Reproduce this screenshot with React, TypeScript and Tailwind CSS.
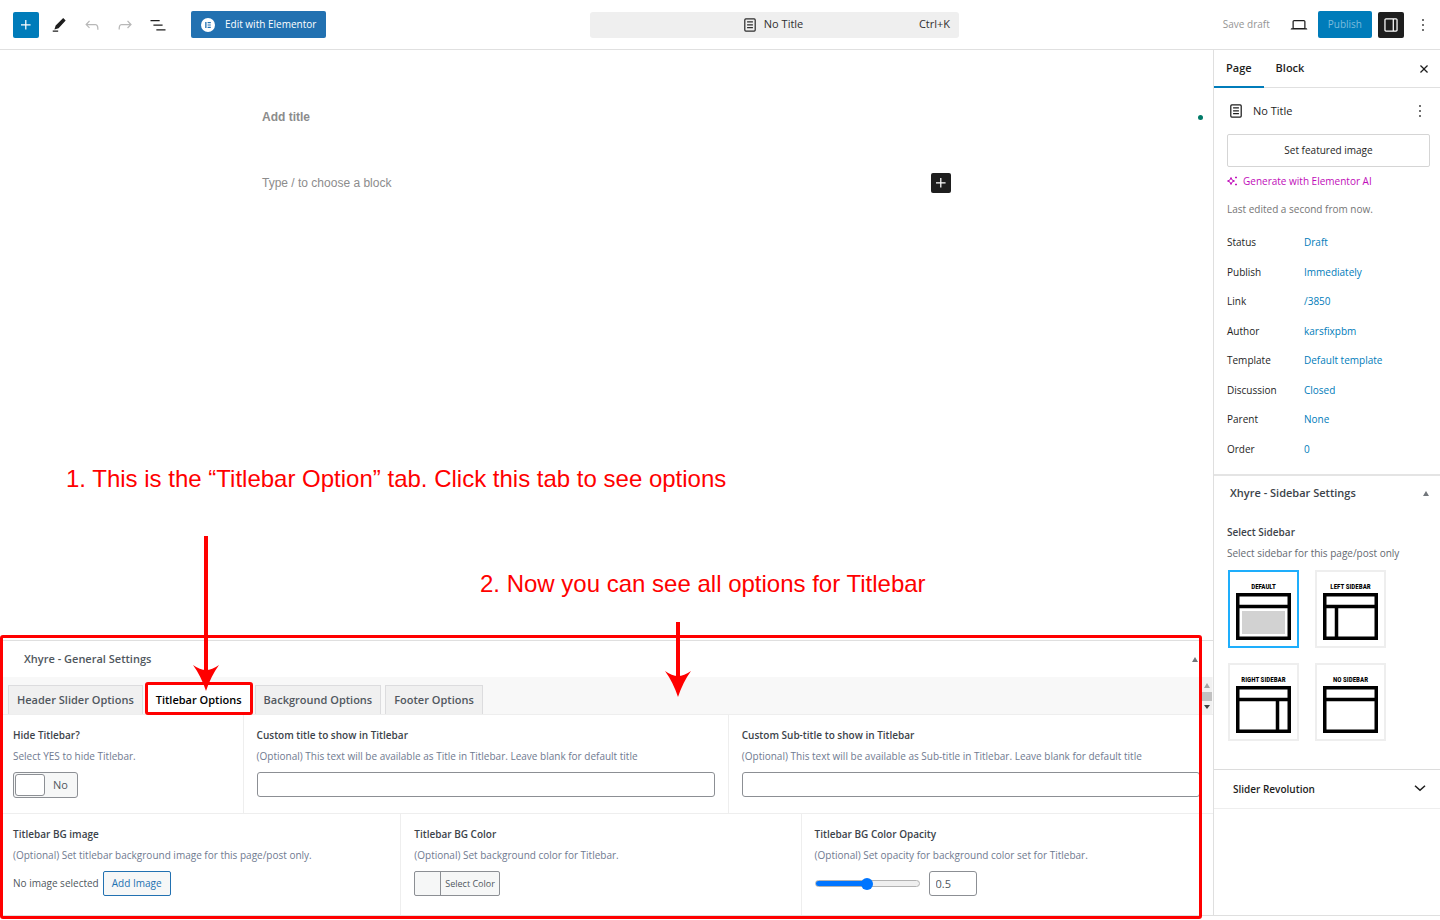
import { useState } from 'react'
import type { ReactNode } from 'react'
import clsx from 'clsx'

const ICONS = {
  plus: 'M11 12.5V17.5H12.5V12.5H17.5V11H12.5V6H11V11H6V12.5H11Z',
  pencil: 'm20 6.500-3-3-9 9-1.500 5 5-1.500L20 6.500Zm-9 12H4.500V20.200H11v-1.700Z',
  undo: 'M18.3 11.7c-.6-.6-1.4-.9-2.3-.9H6.7l2.9-3.3-1.1-1-4.5 5L8.5 16l1-1-2.7-2.7H16c.5 0 .9.2 1.3.5 1 1 1 3.4 1 4.5v.3h1.5v-.2c0-1.5 0-4.3-1.5-5.7z',
  redo: 'M15.6 6.5l-1.1 1 2.9 3.3H8c-.9 0-1.7.3-2.3.9-1.4 1.5-1.4 4.2-1.4 5.6v.2h1.5v-.3c0-1.1 0-3.5 1-4.5.3-.3.7-.5 1.3-.5h9.2L14.5 15l1.1 1.1 4.6-4.6-4.6-5z',
  listView: 'M3 6h11v1.5H3V6Zm3.5 5.5h11V13h-11v-1.5ZM21 17H10v1.5h11V17Z',
  page: 'M15.5 7.5h-7V9h7V7.5Zm-7 3.5h7v1.5h-7V11Zm7 3.5h-7V16h7v-1.5ZM17 4H7a2 2 0 0 0-2 2v12a2 2 0 0 0 2 2h10a2 2 0 0 0 2-2V6a2 2 0 0 0-2-2ZM7 5.5h10a.5.5 0 0 1 .5.5v12a.5.5 0 0 1-.5.5H7a.5.5 0 0 1-.5-.5V6a.5.5 0 0 1 .5-.5Z',
  desktop: 'M20.5 16h-.7V8c0-1.1-.9-2-2-2H6.2c-1.1 0-2 .9-2 2v8h-.7c-.8 0-1.5.7-1.5 1.5h20c0-.8-.7-1.5-1.5-1.5zM5.7 8c0-.3.2-.5.5-.5h11.6c.3 0 .5.2.5.5v7.6H5.7V8z',
  drawer: 'M18 4H6c-1.1 0-2 .9-2 2v12c0 1.1.9 2 2 2h12c1.1 0 2-.9 2-2V6c0-1.1-.9-2-2-2zm-4 14.5H6c-.3 0-.5-.2-.5-.5V6c0-.3.2-.5.5-.5h8v13zm4.5-.5c0 .3-.2.5-.5.5h-2.5v-13H18c.3 0 .5.2.5.5v12z',
  more: 'M13 19h-2v-2h2v2zm0-6h-2v-2h2v2zm0-6h-2V5h2v2z',
  close: 'M12 13.06l3.712 3.713 1.061-1.06L13.061 12l3.712-3.712-1.06-1.06L12 10.938 8.288 7.227l-1.061 1.06L10.939 12l-3.712 3.712 1.06 1.061L12 13.061z',
  chevron: 'M17.4 7.4l1.2 1.300-6.600 6-6.600-6 1.200-1.300L12 12.400z',
}

function Icon({ name, className = 'size-5' }: { name: keyof typeof ICONS; className?: string }) {
  return (
    <svg viewBox="0 0 24 24" fill="currentColor" fillRule="evenodd" aria-hidden="true" className={clsx('shrink-0', className)}>
      <path d={ICONS[name]} />
    </svg>
  )
}

function Triangle({ down = false, className }: { down?: boolean; className?: string }) {
  return (
    <svg viewBox="0 0 6 5" aria-hidden="true" fill="currentColor" className={clsx('w-1.5 h-[5px]', className)}>
      <path d={down ? 'M0 0h6L3 4z' : 'M0 5h6L3 0z'} />
    </svg>
  )
}

function IconButton({ icon, label, className }: { icon: keyof typeof ICONS; label: string; className?: string }) {
  return (
    <button type="button" aria-label={label} className={clsx('flex size-[26px] items-center justify-center rounded-xs', className)}>
      <Icon name={icon} />
    </button>
  )
}

function TopBar() {
  return (
    <header className="flex h-[50px] items-center border-b border-[#e0e0e0] px-[13px]">
      <div className="flex items-center gap-[7px]">
        <IconButton icon="plus" label="Add block" className="bg-[#007cba] text-white" />
        <IconButton icon="pencil" label="Tools" />
        <IconButton icon="undo" label="Undo" className="text-[#b8b8b8]" />
        <IconButton icon="redo" label="Redo" className="text-[#b8b8b8]" />
        <IconButton icon="listView" label="Document overview" />
      </div>
      <button type="button" className="ml-5 flex h-[27px] items-center gap-2.5 rounded-xs bg-[#2271b1] px-2.5 text-[10px] font-medium whitespace-nowrap text-white">
        <svg viewBox="0 0 14 14" className="size-3.5" aria-hidden="true">
          <circle cx="7" cy="7" r="7" fill="#fff" />
          <path d="M4.2 4h1.3v6H4.2zM6.6 4h3.2v1.2H6.6zM6.6 6.4h3.2v1.2H6.6zM6.6 8.8h3.2V10H6.6z" fill="#2271b1" />
        </svg>
        Edit with Elementor
      </button>

      <div className="flex flex-1 justify-center">
        <button type="button" className="flex h-[26px] w-[369px] items-center rounded-[3px] bg-[#efefef] px-[9px] text-[11px] text-[#2f2f2f]">
          <span className="flex-1" />
          <span className="flex items-center gap-1 pr-1.5">
            <Icon name="page" />
            No Title
          </span>
          <span className="flex-1 text-right">Ctrl+K</span>
        </button>
      </div>

      <div className="flex items-center gap-1.5">
        <button type="button" className="mr-2.5 text-[10px] text-[#949494]">Save draft</button>
        <IconButton icon="desktop" label="View" />
        <button type="button" className="h-[27px] rounded-xs bg-[#007cba] px-2.5 text-[10px] text-[#7dbcdd]">Publish</button>
        <IconButton icon="drawer" label="Settings" className="bg-[#1e1e1e] text-white" />
        <button type="button" aria-label="Options" className="-mr-[9px] flex size-[26px] items-center justify-center">
          <Icon name="more" />
        </button>
      </div>
    </header>
  )
}

function Canvas() {
  return (
    <div className="relative flex-1 pt-[58px] font-['Liberation_Sans',Arial,sans-serif] text-[12px] text-[#8c8c8c]">
      <div className="mx-auto w-[689px] max-w-full">
        <h1 className="h-[18px] leading-[18px] font-bold">Add title</h1>
        <div className="mt-[47px] flex items-center justify-between">
          <p>Type / to choose a block</p>
          <button type="button" aria-label="Add block" className="flex size-5 items-center justify-center rounded-xs bg-[#1e1e1e] text-white">
            <Icon name="plus" />
          </button>
        </div>
      </div>
      <span className="absolute top-[65px] right-2.5 size-[5px] rounded-full bg-[#007a68]" />
    </div>
  )
}

function Field({ title, hint, htmlFor, className, children }: { title: string; hint: string; htmlFor?: string; className?: string; children: ReactNode }) {
  return (
    <div className={clsx('shrink-0 px-[13px] pt-3', className)}>
      <label htmlFor={htmlFor} className="block text-[10px] leading-[17px] font-semibold text-[#3c434a]">{title}</label>
      <p className="mt-1 mb-2 text-[10px] leading-4 whitespace-nowrap text-[#6f7a90]">{hint}</p>
      {children}
    </div>
  )
}

const TABS = ['Header Slider Options', 'Titlebar Options', 'Background Options', 'Footer Options']

function MetaTabs() {
  return (
    <div className="relative flex h-[37px] items-end bg-[#f8f8f8] pl-2">
      <div role="tablist" className="flex gap-1">
        {TABS.map((tab) => {
          const active = tab === 'Titlebar Options'
          return (
            <button
              key={tab}
              type="button"
              role="tab"
              aria-selected={active}
              className={clsx(
                'relative h-[29px] border border-b-0 px-2 text-[11px] font-semibold whitespace-nowrap',
                active ? 'border-white bg-white text-black' : 'border-[#dcdcde] bg-[#f0f0f0] text-[#50575e]',
              )}
            >
              {tab}
              {active && <span className="absolute -inset-x-[3px] -top-1 -bottom-px rounded-[3px] border-3 border-[#ff0000]" />}
            </button>
          )
        })}
      </div>
      {/* scroll arrows next to the panel */}
      <div className="absolute top-0 right-px flex h-[37px] w-2.5 flex-col items-center justify-between bg-[#f1f1f1] pt-1.5 pb-1">
        <Triangle className="text-[#a3a3a3]" />
        <span className="h-[9px] w-full bg-[#c1c1c1]" />
        <Triangle down className="text-[#404040]" />
      </div>
    </div>
  )
}

function Arrow({ height, className }: { height: number; className?: string }) {
  return (
    <svg width="28" height={height} aria-hidden="true" fill="#ff0000" className={clsx('absolute', className)}>
      <rect x="12" y="0" width="4" height={height - 12} />
      <path d={`M14 ${height} Q9 ${height - 15} 1 ${height - 26} Q8 ${height - 21} 14 ${height - 21} Q20 ${height - 21} 27 ${height - 26} Q19 ${height - 15} 14 ${height} Z`} />
    </svg>
  )
}

/* Tutorial notes that sit on top of the editor, placed from the panel's top edge. */
function Callouts() {
  return (
    <div className="pointer-events-none absolute inset-0 font-['Liberation_Sans',Arial,sans-serif] text-[24px] leading-7 whitespace-nowrap text-[#ff0000]">
      <p className="absolute -top-44 left-[66px]">1. This is the “Titlebar Option” tab. Click this tab to see options</p>
      <p className="absolute -top-[71px] left-[480px]">2. Now you can see all options for Titlebar</p>
      <Arrow height={155} className="-top-[105px] left-48" />
      <Arrow height={75} className="-top-[19px] left-[664px]" />
      <div className="absolute -top-[6px] right-[11px] -bottom-1 left-0 rounded-[3px] border-3 border-[#ff0000]" />
    </div>
  )
}

function GeneralSettings() {
  const [opacity, setOpacity] = useState(0.5)
  const fill = `${opacity * 100}%`
  const input = 'block h-[25px] w-full rounded-[3px] border border-[#8c8f94] bg-white'

  return (
    <section className="relative border-y border-[#dfdfdf]">
      <div className="flex h-9 items-center justify-between pr-[15px] pl-6">
        <h2 className="text-[11px] font-semibold text-[#50575e]">Xhyre - General Settings</h2>
        <Triangle className="text-[#72777c]" />
      </div>
      <MetaTabs />

      <div className="flex overflow-hidden border-t border-[#eeeeee]">
        <Field title="Hide Titlebar?" hint="Select YES to hide Titlebar." htmlFor="hide-titlebar" className="w-1/5 pb-[15px]">
          <label className="flex h-[26px] w-[65px] items-center rounded-[3px] border border-[#8c8f94] bg-[#f6f7f7] p-px text-[11px] text-[#50575e]">
            <input id="hide-titlebar" type="checkbox" role="switch" className="sr-only" />
            <span className="h-full w-[30px] rounded-[3px] border border-[#8c8f94] bg-white" />
            <span className="flex-1 text-center">No</span>
          </label>
        </Field>
        <Field title="Custom title to show in Titlebar" hint="(Optional) This text will be available as Title in Titlebar. Leave blank for default title" htmlFor="custom-title" className="w-2/5 border-l border-[#eeeeee]">
          <input id="custom-title" type="text" className={input} />
        </Field>
        <Field title="Custom Sub-title to show in Titlebar" hint="(Optional) This text will be available as Sub-title in Titlebar. Leave blank for default title" htmlFor="custom-subtitle" className="w-2/5 border-l border-[#eeeeee]">
          <input id="custom-subtitle" type="text" className={input} />
        </Field>
      </div>

      <div className="flex overflow-hidden border-t border-[#eeeeee]">
        <Field title="Titlebar BG image" hint="(Optional) Set titlebar background image for this page/post only." htmlFor="bg-image" className="w-[33%] pb-[19px]">
          <div className="flex items-center gap-1 text-[10px] text-[#50575e]">
            No image selected
            <button id="bg-image" type="button" className="h-[25px] rounded-xs border border-[#2271b1] bg-[#f6f7f7] px-2 text-[#2271b1]">Add Image</button>
          </div>
        </Field>
        <Field title="Titlebar BG Color" hint="(Optional) Set background color for Titlebar." htmlFor="bg-color" className="w-[33%] border-l border-[#eeeeee]">
          <button id="bg-color" type="button" className="flex h-[25px] rounded-xs border border-[#8c8f94] bg-[#f6f7f7] text-[9px] leading-[23px] text-[#50575e]">
            <span className="w-[26px] border-r border-[#8c8f94]" />
            <span className="px-1">Select Color</span>
          </button>
        </Field>
        <Field title="Titlebar BG Color Opacity" hint="(Optional) Set opacity for background color set for Titlebar." htmlFor="bg-opacity" className="w-[34%] border-l border-[#eeeeee]">
          <div className="flex items-center gap-[9px]">
            <input
              id="bg-opacity"
              type="range"
              min={0}
              max={1}
              step={0.1}
              value={opacity}
              onChange={(e) => setOpacity(Number(e.target.value))}
              style={{ backgroundImage: `linear-gradient(to right, #0075ff ${fill}, #efefef ${fill})` }}
              className="h-[7px] w-[105px] appearance-none rounded-full border border-[#b2b2b2] [&::-webkit-slider-thumb]:size-3 [&::-webkit-slider-thumb]:appearance-none [&::-webkit-slider-thumb]:rounded-full [&::-webkit-slider-thumb]:bg-[#0075ff]"
            />
            <input
              type="text"
              aria-label="Opacity value"
              value={opacity}
              onChange={(e) => setOpacity(Number(e.target.value) || 0)}
              className="h-[25px] w-12 rounded-[3px] border border-[#8c8f94] px-1.5 text-[11px] text-[#50575e]"
            />
          </div>
        </Field>
      </div>
      <Callouts />
    </section>
  )
}

const SUMMARY = [
  ['Status', 'Draft'],
  ['Publish', 'Immediately'],
  ['Link', '/3850'],
  ['Author', 'karsfixpbm'],
  ['Template', 'Default template'],
  ['Discussion', 'Closed'],
  ['Parent', 'None'],
  ['Order', '0'],
]

const LAYOUTS = [
  { id: 'default', name: 'DEFAULT' },
  { id: 'left', name: 'LEFT SIDEBAR' },
  { id: 'right', name: 'RIGHT SIDEBAR' },
  { id: 'none', name: 'NO SIDEBAR' },
]

function LayoutOption({ id, name }: { id: string; name: string }) {
  return (
    <label className="flex h-[78px] w-[71px] flex-col items-center border-2 border-[#eeeeee] pt-[9px] has-checked:border-[#1eaefc]">
      <input type="radio" name="sidebar-layout" value={id} defaultChecked={id === 'default'} className="sr-only" />
      <span className="font-['Liberation_Sans_Narrow','Roboto_Condensed',Roboto,sans-serif] text-[7px] leading-3 font-bold whitespace-nowrap text-black">{name}</span>
      <svg viewBox="0 0 55 47" className="h-[47px] w-[55px]" aria-hidden="true">
        <g fill="none" stroke="#000" strokeWidth="3.500">
          <path d="M1.750 1.750h51.500v43.500H1.750z" />
          <path d="M2 13.500h51" />
          {id === 'left' && <path d="M13.500 13v32" />}
          {id === 'right' && <path d="M41.500 13v32" />}
        </g>
        {id === 'default' && <path d="M6 18h43v23H6z" fill="#d2d2d2" />}
      </svg>
    </label>
  )
}

function Sidebar() {
  return (
    <aside className="w-[227px] shrink-0 border-b border-l border-[#dfdfdf] text-[10px] text-[#1e1e1e]">
      <div className="flex h-[38px] items-stretch border-b border-[#e0e0e0] text-[11px]">
        <button type="button" className="-mb-px border-b-2 border-[#007cba] px-3 font-semibold">Page</button>
        <button type="button" className="px-3 font-semibold">Block</button>
        <button type="button" aria-label="Close settings" className="mr-1.5 ml-auto">
          <Icon name="close" />
        </button>
      </div>

      <div className="px-[13px] pt-3">
        <div className="-mr-[3px] -ml-px flex h-[22px] items-center gap-[7px] text-[11px]">
          <Icon name="page" />
          <span>No Title</span>
          <button type="button" aria-label="Actions" className="ml-auto">
            <Icon name="more" />
          </button>
        </div>
        <div className="mt-3 -mr-[3px]">
          <button type="button" className="h-[33px] w-full rounded-xs border border-[#d5d5d5]">Set featured image</button>
        </div>
        <button type="button" className="mt-1.5 flex h-4 items-center gap-[5px] whitespace-nowrap text-[#c00bb9]">
          <svg viewBox="0 0 11 10" fill="none" stroke="currentColor" className="h-2.5 w-[11px]" aria-hidden="true">
            <path d="M4 1.500Q4.300 4.700 7.500 5Q4.300 5.300 4 8.500Q3.700 5.300.5 5Q3.700 4.700 4 1.500Z" />
            <path d="M8 1.500h2M9 .5v2M8 8.500h2M9 7.500v2" strokeWidth=".9" />
          </svg>
          Generate with Elementor AI
        </button>
        <p className="mt-3 leading-4 text-[#757575]">Last edited a second from now.</p>

        <dl className="mt-[11px] grid h-[236px] auto-rows-fr">
          {SUMMARY.map(([label, value]) => (
            <div key={label} className="flex items-center">
              <dt className="w-[77px]">{label}</dt>
              <dd>
                <a href="#" className="text-[#007cba]">{value}</a>
              </dd>
            </div>
          ))}
        </dl>
      </div>

      <section className="mt-2.5 border-t-2 border-[#e4e4e4] pb-7 text-[#3c434a]">
        <div className="flex h-[34px] items-center justify-between pr-[11px] pl-4">
          <h2 className="text-[11px] font-semibold">Xhyre - Sidebar Settings</h2>
          <Triangle className="text-[#72777c]" />
        </div>
        <fieldset className="px-[13px] pt-[15px]">
          <legend className="contents font-semibold">Select Sidebar</legend>
          <p className="mt-[5px] leading-4 whitespace-nowrap text-[#646970]">Select sidebar for this page/post only</p>
          <div className="mt-[9px] ml-px grid w-fit grid-cols-2 gap-x-4 gap-y-[15px]">
            {LAYOUTS.map((layout) => (
              <LayoutOption key={layout.id} {...layout} />
            ))}
          </div>
        </fieldset>
      </section>

      <button type="button" className="flex h-10 w-full items-center justify-between border-y border-t-[#dcdcdc] border-b-[#eeeeee] pr-2.5 pl-[19px] text-left font-semibold">
        Slider Revolution
        <Icon name="chevron" />
      </button>
    </aside>
  )
}

export default function App() {
  return (
    <div className="flex min-h-screen flex-col overflow-x-hidden bg-white pb-1 font-['Open_Sans','Segoe_UI',sans-serif] text-[#1e1e1e]">
      <TopBar />
      <div className="flex flex-1">
        <main className="flex min-w-0 flex-1 flex-col">
          <Canvas />
          <GeneralSettings />
        </main>
        <Sidebar />
      </div>
    </div>
  )
}
